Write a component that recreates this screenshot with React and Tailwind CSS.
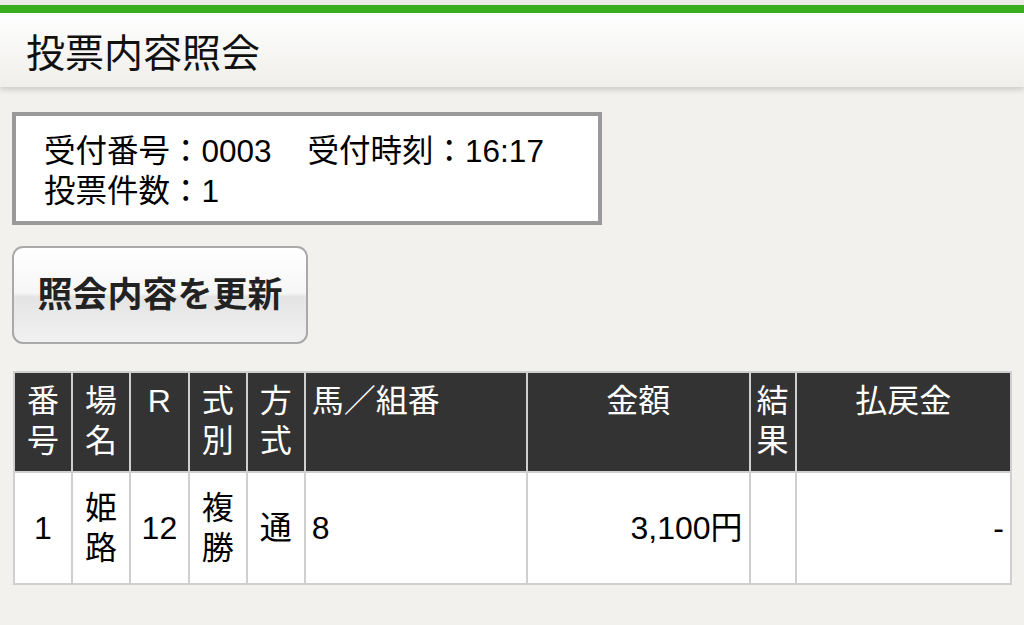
import React from 'react';

const font = { fontFamily: '"Liberation Sans", "Noto Sans CJK JP", sans-serif' };

const cols = [
  { key: 'no', head: ['番', '号'], w: 'w-[58px]', body: '1', align: 'text-center' },
  { key: 'jo', head: ['場', '名'], w: 'w-[58px]', body: ['姫', '路'], align: 'text-center' },
  { key: 'r', head: ['R'], w: 'w-[59px]', body: '12', align: 'text-center' },
  { key: 'shiki', head: ['式', '別'], w: 'w-[58px]', body: ['複', '勝'], align: 'text-center' },
  { key: 'hou', head: ['方', '式'], w: 'w-[58px]', body: '通', align: 'text-center' },
  { key: 'uma', head: ['馬／組番'], w: 'w-[223px]', body: '8', align: 'text-left', headAlign: 'text-left' },
  { key: 'kin', head: ['金額'], w: 'w-[223px]', body: '3,100円', align: 'text-right' },
  { key: 'kekka', head: ['結', '果'], w: 'w-[45px]', body: '', align: 'text-center' },
  { key: 'harai', head: ['払戻金'], w: 'w-[216px]', body: '-', align: 'text-right' },
];

function Lines({ v }) {
  if (Array.isArray(v)) {
    return v.map((s, i) => <div key={i}>{s}</div>);
  }
  return v;
}

export default function App() {
  return (
    <div className="w-[1024px] h-[625px] bg-[#f2f1ee] overflow-hidden text-black" style={font}>
      <div className="h-[5px] bg-[#ecebe7]" />
      <div className="h-[8px] bg-[#3aae1c]" />
      <div className="h-[74px] bg-gradient-to-b from-white to-[#efeeea] shadow-[0_3px_5px_rgba(0,0,0,0.15)] flex items-center pl-[26px] pt-[6px]">
        <h1 className="text-[39px] leading-none font-normal text-[#111]">投票内容照会</h1>
      </div>

      <div className="px-[12px] pt-[25px]">
        <div className="w-[590px] h-[113px] border-[4px] border-[#9a9a9a] bg-white pl-[28px] pt-[15px] text-[31.5px] leading-[40px]">
          <div>
            受付番号：0003<span className="ml-[36px]">受付時刻：16:17</span>
          </div>
          <div>投票件数：1</div>
        </div>

        <button className="mt-[21px] w-[296px] h-[98px] rounded-[11px] border-2 border-[#a9a9a9] bg-[linear-gradient(to_bottom,#ffffff_0%,#f6f6f6_48%,#e4e4e4_52%,#f1f1f1_100%)] text-[35px] font-bold text-[#222] flex items-center justify-center">
          照会内容を更新
        </button>

        <table className="mt-[27px] ml-[1px] border-collapse border-2 border-[#cfcfcf] text-[32px] leading-[40px]">
          <thead>
            <tr className="h-[100px]">
              {cols.map((c) => (
                <th
                  key={c.key}
                  className={`${c.w} ${c.headAlign || 'text-center'} align-top font-normal bg-[#333333] text-white border-2 border-[#cfcfcf] pt-[8px] px-[6px]`}
                >
                  <Lines v={c.head} />
                </th>
              ))}
            </tr>
          </thead>
          <tbody>
            <tr className="h-[112px]">
              {cols.map((c) => (
                <td
                  key={c.key}
                  className={`${c.w} ${c.align} align-middle bg-white border-2 border-[#cfcfcf] px-[6px]`}
                >
                  <Lines v={c.body} />
                </td>
              ))}
            </tr>
          </tbody>
        </table>
      </div>
    </div>
  );
}
